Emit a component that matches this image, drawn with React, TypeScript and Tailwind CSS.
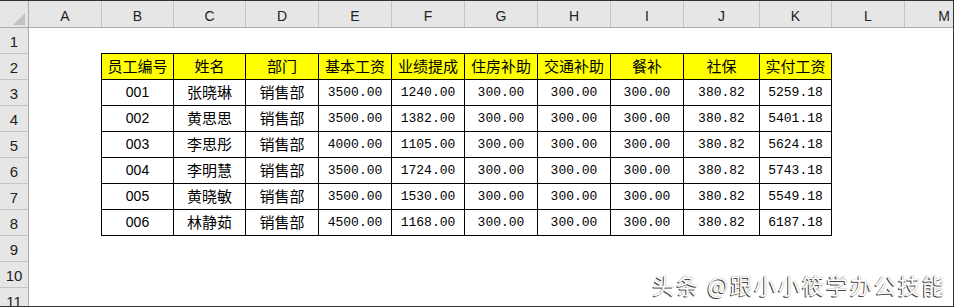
import React from 'react';

const cols = [
  { l: 'A', w: 'w-[73px]' },
  { l: 'B', w: 'w-[72px]' },
  { l: 'C', w: 'w-[72px]' },
  { l: 'D', w: 'w-[73px]' },
  { l: 'E', w: 'w-[73px]' },
  { l: 'F', w: 'w-[73px]' },
  { l: 'G', w: 'w-[73px]' },
  { l: 'H', w: 'w-[73px]' },
  { l: 'I', w: 'w-[73px]' },
  { l: 'J', w: 'w-[76px]' },
  { l: 'K', w: 'w-[72px]' },
  { l: 'L', w: 'w-[73px]' },
];

const heads = ['员工编号', '姓名', '部门', '基本工资', '业绩提成', '住房补助', '交通补助', '餐补', '社保', '实付工资'];

const rows = [
  ['001', '张晓琳', '销售部', '3500.00', '1240.00', '300.00', '300.00', '300.00', '380.82', '5259.18'],
  ['002', '黄思思', '销售部', '3500.00', '1382.00', '300.00', '300.00', '300.00', '380.82', '5401.18'],
  ['003', '李思彤', '销售部', '4000.00', '1105.00', '300.00', '300.00', '300.00', '380.82', '5624.18'],
  ['004', '李明慧', '销售部', '3500.00', '1724.00', '300.00', '300.00', '300.00', '380.82', '5743.18'],
  ['005', '黄晓敏', '销售部', '3500.00', '1530.00', '300.00', '300.00', '300.00', '380.82', '5549.18'],
  ['006', '林静茹', '销售部', '4500.00', '1168.00', '300.00', '300.00', '300.00', '380.82', '6187.18'],
];

const cjk = "font-['Noto_Sans_CJK_SC',sans-serif]";
const num = "font-['Liberation_Mono','Noto_Sans_CJK_SC',monospace]";

// which font a body cell gets, by column
const cellFont = (j: number) => {
  if (j === 0) return "text-[14px] font-['Liberation_Sans',sans-serif]";
  if (j === 1 || j === 2) return `text-[15px] ${cjk}`;
  return `text-[13px] ${num}`;
};

export default function App() {
  return (
    <div className="relative w-[954px] h-[307px] overflow-hidden bg-white border-t border-r border-b border-[#333] font-['Liberation_Sans',sans-serif] text-black">
      {/* column letters */}
      <div className="flex h-[27px] bg-[#e6e6e6] border-b border-[#ababab]">
        <div className="w-[29px] shrink-0 border-r border-[#ababab] flex items-end justify-end pr-[3px] pb-[2px]">
          <svg width="12" height="12" viewBox="0 0 12 12">
            <polygon points="12,0 12,12 0,12" fill="#c2c2c2" />
          </svg>
        </div>
        {cols.map((c) => (
          <div key={c.l} className={`${c.w} shrink-0 border-r border-[#c4c4c4] flex items-end justify-center pb-[1px] text-[14px] leading-[20px] text-[#222]`}>
            {c.l}
          </div>
        ))}
        <div className="flex-1 flex items-end justify-center pb-[1px] pl-[30px] text-[14px] leading-[20px] text-[#222]">M</div>
      </div>

      <div className="flex">
        {/* row numbers */}
        <div className="w-[29px] shrink-0 bg-[#e6e6e6] border-r border-[#ababab]">
          {Array.from({ length: 11 }, (_, i) => (
            <div key={i} className="h-[26px] border-b border-[#c4c4c4] flex items-end justify-center pb-[1px] text-[15px] leading-[20px] text-[#222]">
              {i + 1}
            </div>
          ))}
        </div>

        {/* sheet */}
        <div className="flex-1 pt-[25px] pl-[72px]">
          <div className="grid grid-cols-[72px_72px_73px_73px_73px_73px_73px_73px_76px_72px] w-max border-r border-b border-black">
            {heads.map((h) => (
              <div key={h} className={`h-[26px] border-t border-l border-black bg-[#ffff00] flex items-center justify-center text-[15px] ${cjk}`}>
                {h}
              </div>
            ))}
            {rows.map((r) =>
              r.map((v, j) => (
                <div key={r[0] + j} className={`h-[26px] border-t border-l border-black flex items-center justify-center ${cellFont(j)}`}>
                  {v}
                </div>
              ))
            )}
          </div>
        </div>
      </div>

      {/* watermark */}
      <div className={`absolute top-[267px] right-[7px] text-[22px] tracking-[2px] text-white ${cjk} [text-shadow:-1px_1px_0_#444,0_0_1px_#777]`}>
        头条 @跟小小筱学办公技能
      </div>
    </div>
  );
}
